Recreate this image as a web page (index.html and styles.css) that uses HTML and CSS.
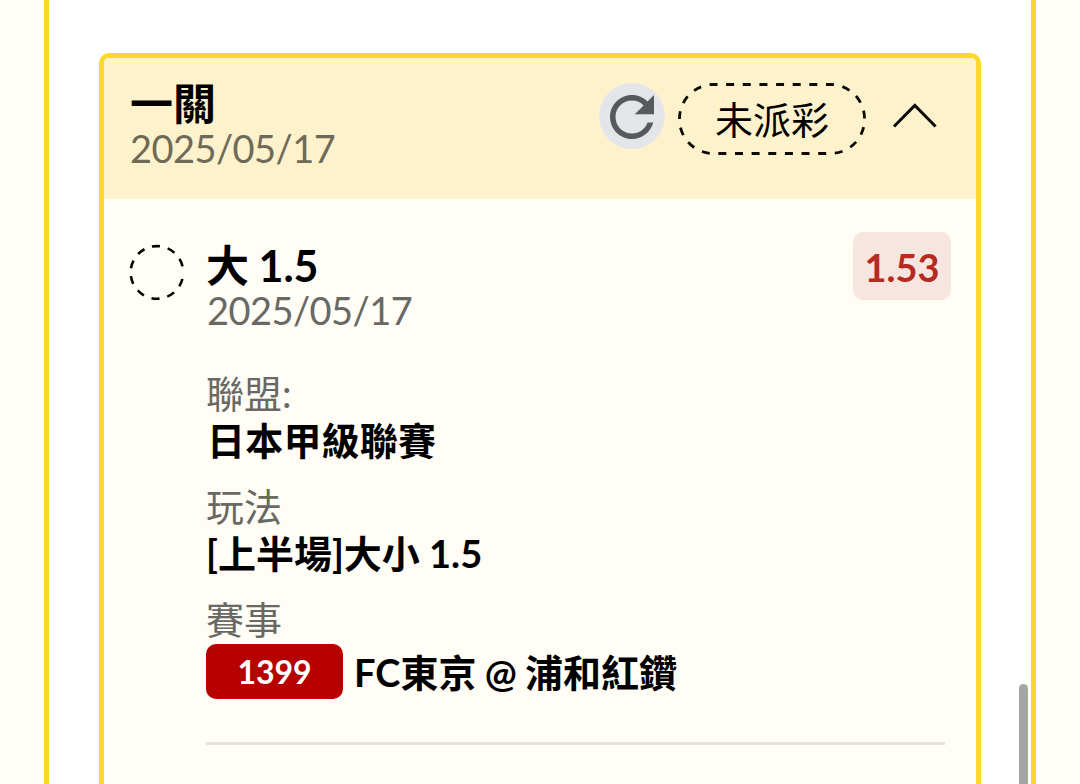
FILE: index.html
```html
<!DOCTYPE html>
<html lang="zh-Hant">
<head>
  <meta charset="UTF-8" />
  <meta name="viewport" content="width=device-width, initial-scale=1" />
  <title>一關</title>
  <link rel="stylesheet" href="styles.css">
</head>
<body>
  <main class="frame">
    <section class="ticket">
      <header class="ticket-head">
        <div class="head-text">
          <h2 class="title">一關</h2>
          <p class="date">2025/05/17</p>
        </div>
        <button type="button" class="refresh" aria-label="重新整理">
          <svg width="66" height="66" viewBox="0 0 24 24">
            <path d="M17.65 6.35C16.2 4.9 14.21 4 12 4c-4.42 0-7.99 3.58-7.99 8s3.57 8 7.99 8c3.73 0 6.84-2.55 7.73-6h-2.08c-.82 2.33-3.04 4-5.65 4-3.31 0-6-2.69-6-6s2.69-6 6-6c1.66 0 3.14.69 4.22 1.78L13 11h7V4l-2.35 2.35z" />
          </svg>
        </button>
        <div class="status">
          <svg class="status-line" width="188" height="72" viewBox="0 0 188 72">
            <rect x="1.5" y="1.5" width="185" height="69" rx="34" pathLength="270" />
          </svg>
          <span>未派彩</span>
        </div>
        <svg class="chevron" width="46" height="28" viewBox="0 0 46 28">
          <path d="M2 24.5L22.8 3.5L43.6 24.5" />
        </svg>
      </header>

      <div class="bet">
        <svg class="pending" width="56" height="56" viewBox="0 0 56 56">
          <path d="M53.4 35A26.3 26.3 0 1 1 54.2 27" />
        </svg>
        <div class="bet-body">
          <div class="bet-top">
            <div>
              <h3 class="title">大 1.5</h3>
              <p class="date">2025/05/17</p>
            </div>
            <span class="odds">1.53</span>
          </div>
          <dl class="info">
            <dt>聯盟:</dt>
            <dd class="league">日本甲級聯賽</dd>
            <dt>玩法</dt>
            <dd>[上半場]大小 1.5</dd>
            <dt>賽事</dt>
            <dd class="match"><span class="match-no">1399</span><span>FC東京 @ 浦和紅鑽</span></dd>
          </dl>
        </div>
      </div>
    </section>
  </main>
  <div class="scrollbar"></div>
</body>
</html>
```

FILE: styles.css
```css
* {
  box-sizing: border-box;
}
body {
  margin: 0;
  height: 784px;
  padding: 0 44px;
  overflow: hidden;
  background: #fffdf5;
  color: #000;
  font-family: Lato, "Noto Sans CJK TC", sans-serif;
  font-size: 38px;
  line-height: 46px;
}
h2, h3, p, dl, dd {
  margin: 0;
}
.frame {
  height: 784px;
  padding: 53px 50px 0;
  background: #fff;
  border: solid #fcd82f;
  border-width: 0 5px;
}
.ticket {
  height: 731px;
  background: #fffdf5;
  border: 5px solid #fcd82f;
  border-bottom: 0;
  border-radius: 10px 10px 0 0;
  overflow: hidden;
}
.ticket-head {
  display: flex;
  align-items: flex-start;
  height: 141px;
  padding: 24px 38px 0 26px;
  background: #fef2cc;
}
.head-text {
  flex: 1;
}
.title {
  font-size: 43px;
  line-height: 46px;
  font-weight: 700;
  word-spacing: -1px;
}
.date {
  line-height: 44px;
  letter-spacing: -0.55px;
  color: #686864;
}
.ticket-head .title {
  line-height: 44px;
}
.ticket-head .date {
  color: #6f6a58;
}
.refresh {
  display: flex;
  align-items: center;
  justify-content: center;
  width: 66px;
  height: 66px;
  margin-top: 1px;
  padding: 1px 0 0;
  border: 0;
  border-radius: 50%;
  background: #e3e5e8;
}
.refresh svg {
  flex: none;
  fill: #58595b;
}
.status {
  position: relative;
  display: flex;
  justify-content: center;
  width: 188px;
  height: 72px;
  margin: 1px 26px 0 13px;
  line-height: 73px;
}
.status-line {
  position: absolute;
  inset: 0;
  fill: none;
  stroke: #0c0a05;
  stroke-width: 2.8;
  stroke-dasharray: 4.8 5.2;
  stroke-dashoffset: 2.4;
}
.chevron {
  margin-top: 20px;
  fill: none;
  stroke: #0c0a05;
  stroke-width: 3;
}
.bet {
  display: flex;
  padding: 33px 25px 0;
}
.pending {
  flex: none;
  margin: 12px 21px 0 0;
  fill: none;
  stroke: #000;
  stroke-width: 2.6;
  stroke-dasharray: 8 8;
}
.bet-body {
  flex: 1;
}
.bet-top {
  display: flex;
  justify-content: space-between;
  align-items: flex-start;
}
.bet-top .title {
  padding-top: 11px;
  line-height: 45px;
}
.bet-top .date {
  padding-left: 1px;
  line-height: 45px;
}
.odds {
  width: 98px;
  height: 68px;
  border-radius: 10px;
  background: #f7e6df;
  color: #b72a22;
  font-weight: 700;
  line-height: 70px;
  text-align: center;
}
.info {
  margin: 37px 6px 0 0;
  padding-bottom: 43px;
  border-bottom: 3px solid #e7e3dc;
}
.info dt {
  color: #686864;
}
.info dd {
  margin-bottom: 20px;
  padding-top: 1px;
  font-weight: 700;
}
.info .league {
  padding-left: 1px;
  letter-spacing: 0.2px;
}
.info .match {
  display: flex;
  align-items: center;
  gap: 11px;
  height: 55px;
  margin: 2px 0 0;
  padding: 0;
  word-spacing: -1px;
}
.match-no {
  width: 137px;
  height: 55px;
  border-radius: 10px;
  background: #b70000;
  color: #fff;
  font-size: 32px;
  line-height: 55px;
  text-align: center;
}
.scrollbar {
  position: absolute;
  top: 684px;
  left: 1019px;
  width: 9px;
  height: 100px;
  border-radius: 5px 5px 0 0;
  background: #a5a5a5;
}
```
